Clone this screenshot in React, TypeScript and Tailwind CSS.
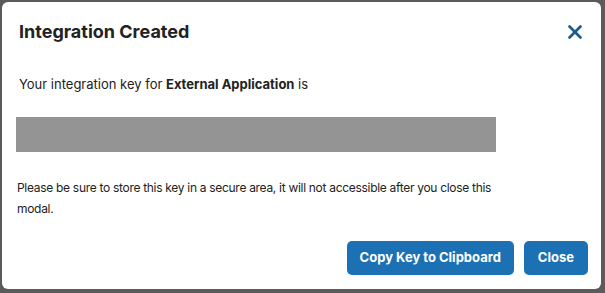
import React from 'react';
import { X } from 'lucide-react';

export default function App() {
  return (
    <div className="w-[605px] h-[293px] bg-[#5b5b5b] pt-[2px] pl-[2px] font-['Inter',sans-serif]">
      <div className="w-[599px] h-[287px] bg-white rounded-[6px] flex flex-col">
        <div className="flex items-center justify-between pl-[17px] pr-[15px] pt-[19px]">
          <h1 className="text-[18px] font-bold text-[#222] leading-[22px]">Integration Created</h1>
          <button aria-label="Close" className="text-[#1b5d8c]">
            <X className="w-[22px] h-[22px]" strokeWidth={3} />
          </button>
        </div>
        <p className="mt-[32px] pl-[17px] text-[13px] leading-[18px] text-[#222]">
          Your integration key for <span className="font-bold">External Application</span> is
        </p>
        <div className="mt-[24px] ml-[14px] w-[480px] h-[35px] bg-[#949494]" />
        <p className="mt-[25px] pl-[15px] w-[500px] text-[12px] tracking-[-0.3px] leading-[21px] text-[#222]">
          Please be sure to store this key in a secure area, it will not accessible after you close this modal.
        </p>
        <div className="mt-auto mb-[14px] flex justify-end gap-[10px] pr-[13px]">
          <button className="h-[34px] px-[13px] rounded-[5px] bg-[#1b71b3] text-white text-[13px] font-bold">
            Copy Key to Clipboard
          </button>
          <button className="h-[34px] px-[14px] rounded-[5px] bg-[#1b71b3] text-white text-[13px] font-bold">
            Close
          </button>
        </div>
      </div>
    </div>
  );
}
